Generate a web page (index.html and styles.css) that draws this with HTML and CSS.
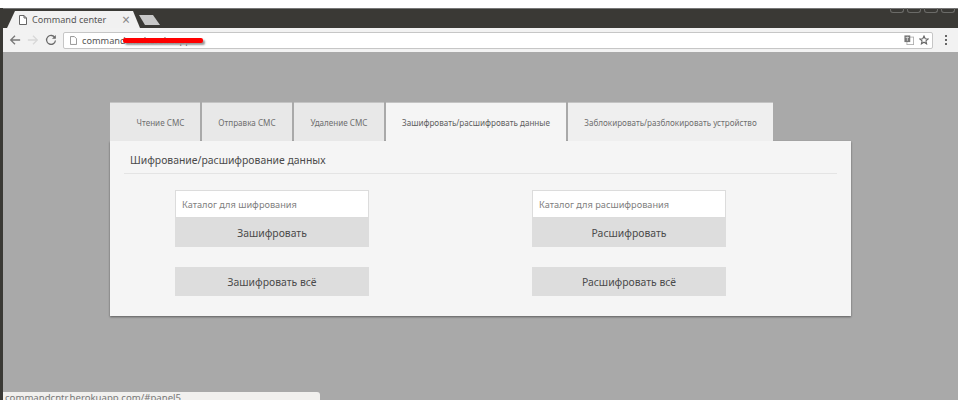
FILE: index.html
```html
<!DOCTYPE html>
<html lang="ru">
<head>
<meta charset="utf-8">
<title>Command center</title>
<link rel="stylesheet" href="styles.css">
</head>
<body>
<div class="window">
  <div class="tabstrip">
    <div class="browser-tab">
      <svg class="page-icon" width="8" height="10" viewBox="0 0 8 10"><path d="M.5.5h4.500l2.500 2.500v6.500H.5z M5 .5v2.500h2.500" fill="#fff" stroke="#666"/></svg>
      <span class="browser-tab-title">Command center</span>
      <span class="browser-tab-close">×</span>
    </div>
    <div class="new-tab"></div>
    <div class="window-controls"><i></i><i></i><i></i><i></i></div>
  </div>
  <div class="toolbar">
    <svg class="nav" width="14" height="14" viewBox="0 0 14 14"><path d="M13 7H2M7 2L2 7l5 5" fill="none" stroke="#777" stroke-width="1.500"/></svg>
    <svg class="nav" width="14" height="14" viewBox="0 0 14 14"><path d="M1 7h11M7 2l5 5-5 5" fill="none" stroke="#d8d8d8" stroke-width="1.500"/></svg>
    <svg class="nav" width="14" height="14" viewBox="0 0 14 14"><path d="M11.600 4.400A5.200 5.200 0 1 0 12.200 7.600" fill="none" stroke="#6a6a6a" stroke-width="1.500"/><path d="M12.600 1.200v4.400H8.200z" fill="#6a6a6a"/></svg>
    <div class="omnibox">
      <svg class="url-icon" width="7" height="9" viewBox="0 0 8 10"><path d="M.5.5h4.500l2.500 2.500v6.500H.5z" fill="#fff" stroke="#888"/></svg>
      <span class="url">commandcntr.herokuapp</span>
      <span class="redact"></span>
      <svg class="translate" width="10" height="10" viewBox="0 0 12 12"><rect x="3.500" y="2.500" width="8" height="9" fill="#fff" stroke="#aaa"/><rect x=".5" y=".5" width="7" height="8" fill="#777"/><path d="M2 3h4M4 2v5" stroke="#ddd"/></svg>
      <svg class="star" width="10" height="10" viewBox="0 0 13 13"><path d="M6.500 1.300l1.600 3.500 3.800.4-2.900 2.500.9 3.700-3.400-2-3.400 2 .9-3.700L1.100 5.200l3.800-.4z" fill="none" stroke="#666" stroke-width="1.400"/></svg>
    </div>
    <div class="menu-dots"><i></i><i></i><i></i></div>
  </div>
  <div class="viewport">
    <div class="app">
      <div class="tabs">
        <a class="tab tab-short tab-first">Чтение СМС</a>
        <a class="tab tab-short">Отправка СМС</a>
        <a class="tab tab-short">Удаление СМС</a>
        <a class="tab tab-active">Зашифровать/расшифровать данные</a>
        <a class="tab tab-light">Заблокировать/разблокировать устройство</a>
      </div>
      <div class="panel">
        <h2 class="panel-title">Шифрование/расшифрование данных</h2>
        <div class="columns">
          <div class="col">
            <input class="field" type="text" placeholder="Каталог для шифрования">
            <button class="btn">Зашифровать</button>
            <button class="btn btn-all">Зашифровать всё</button>
          </div>
          <div class="col">
            <input class="field" type="text" placeholder="Каталог для расшифрования">
            <button class="btn">Расшифровать</button>
            <button class="btn btn-all">Расшифровать всё</button>
          </div>
        </div>
      </div>
    </div>
    <div class="status">commandcntr.herokuapp.com/#panel5</div>
  </div>
</div>
</body>
</html>
```
FILE: styles.css
```css
* { box-sizing: border-box; }
html, body { margin: 0; padding: 0; }
body {
  width: 961px;
  height: 409px;
  background: #fff;
  overflow: hidden;
  font-family: "Noto Sans", "Open Sans", sans-serif;
  padding-top: 8px;
}
.window {
  height: 392px;
  margin-right: 3px;
  border-left: 3px solid #3a3935;
  display: flex;
  flex-direction: column;
  background: #3a3935;
  overflow: hidden;
}
.tabstrip {
  height: 20px;
  flex: none;
  display: flex;
  align-items: flex-end;
  padding-left: 4px;
  position: relative;
  border-top: 1px solid #777;
}
.browser-tab {
  width: 133px;
  height: 17px;
  background: #f1f1f1;
  clip-path: polygon(0 100%, 8px 0, 126px 0, 100% 100%);
  display: flex;
  align-items: center;
  padding-left: 12px;
  color: #555;
  font-size: 9.100px;
}
.page-icon { flex: none; }
.browser-tab-title { margin-left: 5px; flex: 1; white-space: nowrap; }
.browser-tab-close { margin-right: 10px; color: #888; font-size: 14px; line-height: 1; }
.new-tab {
  width: 21px;
  height: 10px;
  margin: 0 0 3px -1px;
  background: #c8c8c8;
  clip-path: polygon(0 0, 14px 0, 100% 100%, 6px 100%);
}
.window-controls {
  position: absolute;
  top: -1px;
  right: 3px;
  display: flex;
  gap: 3px;
}
.window-controls i {
  width: 14px;
  height: 5px;
  border: 1px solid #6b6b68;
  border-top: 0;
  border-radius: 0 0 3px 3px;
}
.toolbar {
  height: 24px;
  flex: none;
  background: #f2f2f2;
  display: flex;
  align-items: center;
  padding: 0 0 0 6px;
  gap: 6px;
}
.nav { flex: none; width: 12px; height: 12px; }
.omnibox {
  width: 870px;
  height: 17px;
  flex: none;
  background: #fff;
  border: 1px solid #c6c6c6;
  border-radius: 2px;
  display: flex;
  align-items: center;
  padding: 0 3px 0 6px;
  position: relative;
  font-size: 9.200px;
  color: #555;
}
.url-icon { flex: none; }
.url { margin-left: 5px; flex: 1; white-space: nowrap; }
.redact {
  position: absolute;
  left: 59px;
  top: 5px;
  width: 80px;
  height: 5px;
  background: #f00;
  border-radius: 2px;
  box-shadow: 2px 2px 2px #999;
}
.translate { flex: none; margin-right: 5px; }
.star { flex: none; }
.menu-dots {
  margin-left: 6px;
  display: flex;
  flex-direction: column;
  gap: 2px;
}
.menu-dots i { width: 2px; height: 2px; background: #666; }
.viewport {
  flex: 1;
  background: #a9a9a9;
  position: relative;
  padding: 50px 0 0 107px;
}
.app { width: 741px; }
.tabs {
  display: flex;
  gap: 2px;
  height: 39px;
}
.tab {
  display: flex;
  align-items: center;
  justify-content: center;
  height: 39px;
  font-size: 8.100px;
  color: #6f6f6f;
  white-space: nowrap;
  background: #e8e8e8;
  border-top: 1px solid #c4c4c4;
  padding-top: 1px;
}
.tab-short { width: 90px; }
.tab-first { padding-left: 11px; }
.tab-active { width: 180px; background: #f5f5f5; color: #5f5f5f; }
.tab-light { width: 205px; background: #efefef; }
.panel {
  height: 175px;
  background: #f5f5f5;
  box-shadow: 0 1px 2px rgba(0,0,0,.45);
  padding: 11px 14px 0;
}
.panel-title {
  margin: 0;
  height: 22px;
  padding: 0 0 0 6px;
  font-size: 10.400px;
  line-height: 16px;
  font-weight: 400;
  color: #4a4a4a;
  border-bottom: 1px solid #e4e4e4;
}
.columns {
  display: flex;
  gap: 163px;
  padding: 16px 0 0 51px;
}
.col {
  width: 194px;
  display: flex;
  flex-direction: column;
}
.field {
  width: 194px;
  height: 28px;
  background: #fff;
  border: 1px solid #dcdcdc;
  padding: 0 6px;
  font: 9.200px "Noto Sans", "Open Sans", sans-serif;
  outline: 0;
}
.field::placeholder { color: #808080; opacity: 1; }
.btn {
  height: 29px;
  border: 0;
  background: #dddddd;
  color: #4a4a4a;
  font: 10.400px "Noto Sans", "Open Sans", sans-serif;
  padding: 0;
}
.btn-all { margin-top: 20px; }
.status {
  position: absolute;
  left: 0;
  bottom: 0;
  width: 317px;
  height: 8px;
  background: #f1f0ee;
  border-radius: 0 3px 0 0;
  color: #777;
  font-size: 9.600px;
  line-height: 11px;
  padding-left: 2px;
  overflow: hidden;
}
```
